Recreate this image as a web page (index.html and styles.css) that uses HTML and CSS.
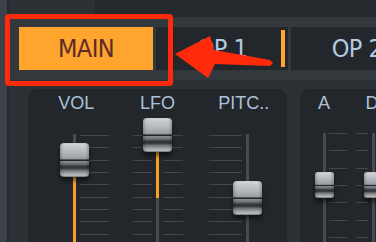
FILE: index.html
```html
<!DOCTYPE html>
<html lang="en">
<head>
  <meta charset="utf-8">
  <meta name="viewport" content="width=device-width, initial-scale=1.0">
  <title>Synth - Main</title>
  <link rel="stylesheet" href="styles.css">
</head>
<body>
  <div class="app">
    <div class="side"></div>
    <div class="main">
      <div class="topbar"><div class="topbar-left"></div></div>

      <div class="tabframe">
        <div class="tabs">
          <div class="tab tab-active">MAIN</div>
          <div class="tab">OP 1<span class="tab-mark"></span></div>
          <div class="tab">OP 2</div>
        </div>
      </div>

      <div class="panels">
        <section class="panel panel-main">
          <div class="col">
            <div class="label label-vol">VOL</div>
            <div class="fader fader-vol">
              <div class="track">
                <div class="fill" style="top: 43px; bottom: 0;"></div>
                <div class="knob" style="top: 9px;"></div>
              </div>
              <div class="ticks" style="width: 29px;"></div>
            </div>
          </div>
          <div class="col">
            <div class="label">LFO</div>
            <div class="fader fader-lfo">
              <div class="ticks" style="width: 19px;"></div>
              <div class="track">
                <div class="fill" style="top: 18px; height: 46px;"></div>
                <div class="knob" style="top: -16px;"></div>
              </div>
              <div class="ticks" style="width: 20px;"></div>
            </div>
          </div>
          <div class="col">
            <div class="label">PITC..</div>
            <div class="fader fader-pitch">
              <div class="ticks" style="width: 33px;"></div>
              <div class="track">
                <div class="knob" style="top: 47px;"></div>
              </div>
            </div>
          </div>
        </section>

        <section class="panel panel-env">
          <div class="col">
            <div class="label">A</div>
            <div class="fader fader-env fader-a">
              <div class="track">
                <div class="knob knob-small" style="top: 39px;"></div>
              </div>
              <div class="ticks ticks-env" style="width: 18px;"></div>
            </div>
          </div>
          <div class="col">
            <div class="label">D</div>
            <div class="fader fader-env fader-d">
              <div class="ticks ticks-env" style="width: 12px;"></div>
              <div class="track">
                <div class="knob knob-small" style="top: 39px;"></div>
              </div>
            </div>
          </div>
        </section>
      </div>
    </div>
  </div>

  <!-- annotation -->
  <div class="callout"></div>
  <svg class="arrow" width="376" height="242" viewBox="0 0 376 242">
    <polygon points="175,54 210,36 214,50 270,60 273,63 270,66 215,64 208,78" fill="#ff2a0c"/>
  </svg>
</body>
</html>
```

FILE: styles.css
```css
* {
  box-sizing: border-box;
}

body {
  margin: 0;
  background-color: #2c3136;
  font-family: "Liberation Sans", Arial, sans-serif;
  overflow: hidden;
}

.app {
  display: flex;
  height: 242px;
}

.side {
  width: 9px;
  background: linear-gradient(to right, #3b4147 0 7px, #272b30 7px);
}

.main {
  flex: 1;
  display: flex;
  flex-direction: column;
  min-width: 0;
}

.topbar {
  height: 17px;
  display: flex;
  background-color: #25292e;
}

.topbar-left {
  width: 86px;
  background-color: #2c3136;
}

.tabframe {
  background-color: #33383d;
  padding: 10px 0 10px 10px;
}

.tabs {
  display: flex;
  gap: 3px;
  height: 43px;
}

.tab {
  position: relative;
  flex: none;
  width: 132px;
  display: flex;
  align-items: center;
  justify-content: center;
  background-color: #23272b;
  color: #b3cbe1;
  font-family: "Liberation Sans Narrow", "DejaVu Sans Condensed", sans-serif;
  font-size: 25px;
  letter-spacing: -0.5px;
}

.tab-active {
  width: 134px;
  background-color: #ffa42d;
  color: #5a2b27;
}

.tab-mark {
  position: absolute;
  right: 3px;
  top: 3px;
  bottom: 3px;
  width: 4px;
  background-color: #ffa42d;
}

.panels {
  flex: 1;
  display: flex;
  gap: 13px;
  padding: 9px 0 0 19px;
  min-height: 0;
  overflow: hidden;
}

.panel {
  flex: none;
  display: grid;
  padding-top: 4px;
  background-color: #23272b;
  border-radius: 9px 9px 0 0;
}

.panel-main {
  width: 259px;
  grid-template-columns: repeat(3, 1fr);
}

.panel-env {
  width: 100px;
  grid-template-columns: 48px 48px;
}

.col {
  display: flex;
  flex-direction: column;
  min-width: 0;
}

.label {
  height: 21px;
  line-height: 21px;
  text-align: center;
  font-size: 18px;
  color: #abc2d8;
  white-space: nowrap;
}

.label-vol {
  padding-left: 10px;
}

/* faders */
.fader {
  flex: 1;
  display: flex;
  gap: 4px;
  margin-top: 20px;
}

.fader-vol {
  margin-left: 45px;
}

.fader-lfo {
  margin-left: 19px;
  gap: 5px 4px;
}

.fader-pitch {
  margin-left: 8px;
}

.fader-env {
  margin-top: 19px;
}

.fader-a {
  margin-left: 23px;
  gap: 3px;
}

.fader-d {
  margin-left: 8px;
}

.ticks {
  flex: none;
  margin-top: 1px;
  background: repeating-linear-gradient(to bottom, #42474d 0 1px, transparent 1px 12.33px);
}

.ticks-env {
  margin-top: 0;
  background: repeating-linear-gradient(to bottom, #42474d 0 1px, transparent 1px 17.33px);
}

.track {
  position: relative;
  flex: none;
  width: 3px;
  background-color: #464b51;
}

.fill {
  position: absolute;
  left: 0;
  right: 0;
  background-color: #f7a224;
}

.knob {
  position: absolute;
  left: 50%;
  width: 29px;
  height: 34px;
  margin-left: -14.5px;
  border-radius: 4px;
  background: linear-gradient(to bottom,
    #e2e4e7 0%, #c9cbcf 8%, #b1b4b9 30%, #9da0a5 44%, #8e9196 48%,
    #222529 49%, #222529 52%, #8b8e93 53%, #6c6f74 62%, #35383d 68%,
    #303338 74%, #6c6f74 80%, #a4a7ac 90%, #b9bbbf 96%, #7b7e83 100%);
  box-shadow: inset 2px 0 2px rgba(0, 0, 0, 0.18), inset -2px 0 2px rgba(0, 0, 0, 0.18),
    0 4px 4px rgba(0, 0, 0, 0.5);
}

.knob-small {
  width: 19px;
  height: 26px;
  margin-left: -9.5px;
  border-radius: 3px;
}

/* annotation */
.callout {
  position: absolute;
  left: 5px;
  top: 14px;
  width: 168px;
  height: 72px;
  border: 5px solid #ff2a0c;
  border-radius: 4px;
}

.arrow {
  position: absolute;
  left: 0;
  top: 0;
}
```
